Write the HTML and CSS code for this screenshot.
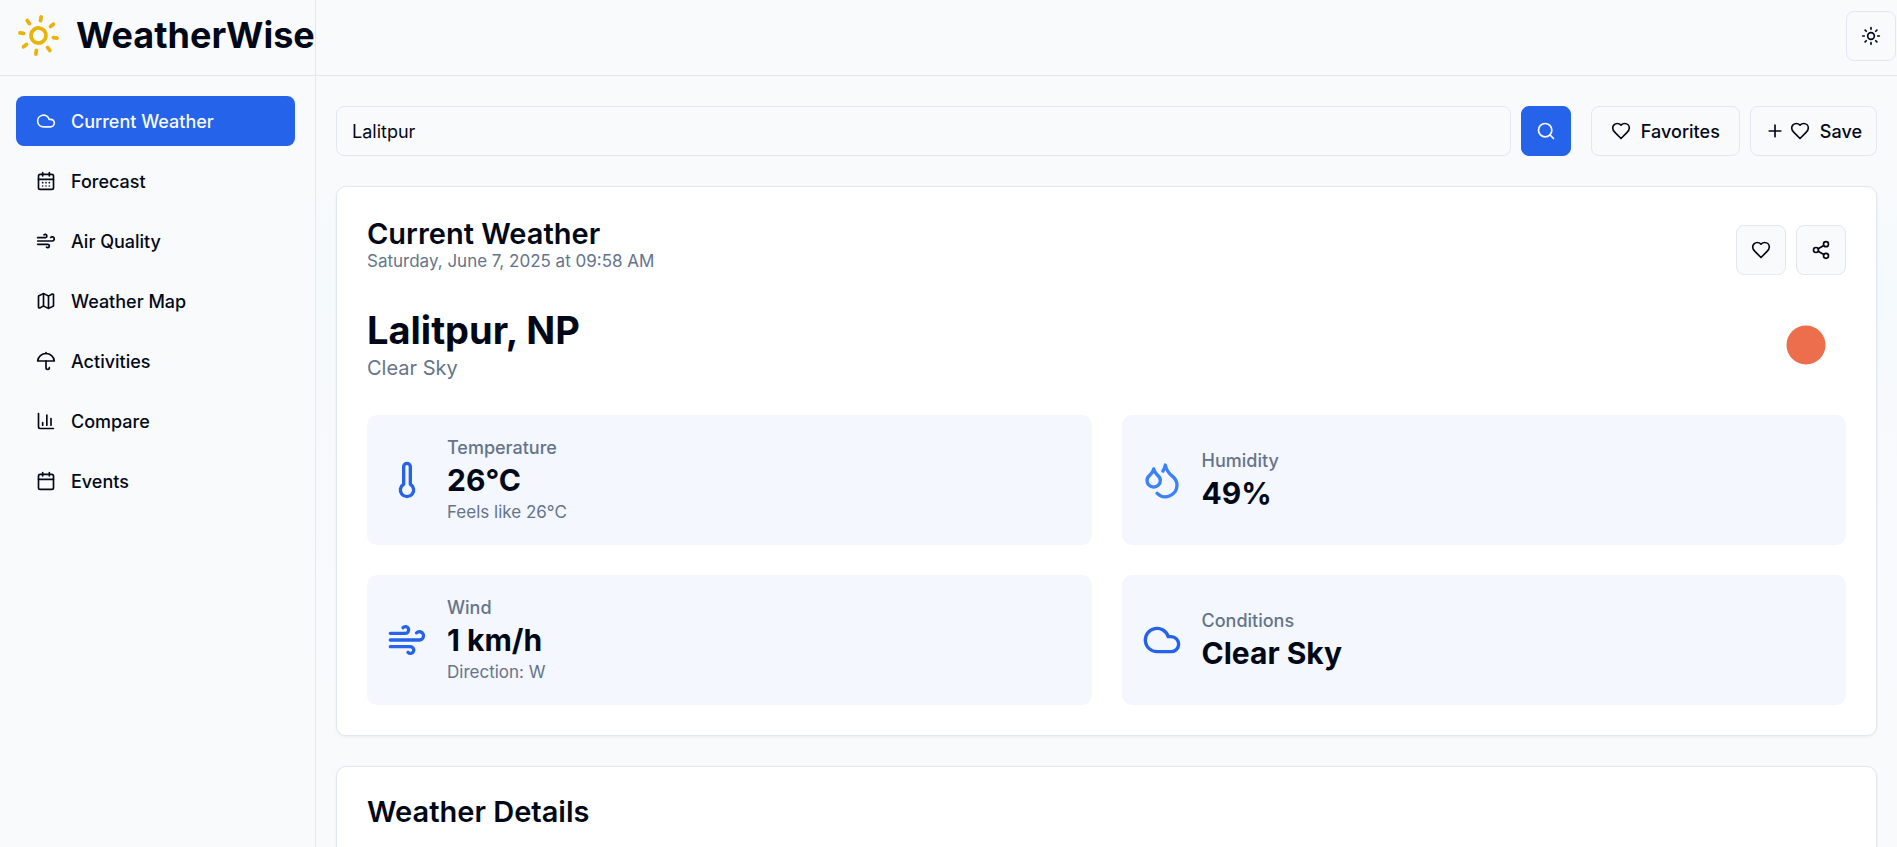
FILE: index.html
```html
<!DOCTYPE html>
<html lang="en">
<head>
<meta charset="utf-8">
<meta name="viewport" content="width=device-width, initial-scale=1">
<title>WeatherWise</title>
<link rel="stylesheet" href="styles.css">
</head>
<body>
<svg class="sprite" aria-hidden="true">
  <symbol id="sun" viewBox="0 0 24 24"><circle cx="12" cy="12" r="4"/><path d="M12 2v2M12 20v2M4.93 4.93l1.41 1.41M17.66 17.66l1.41 1.41M2 12h2M20 12h2M6.34 17.66l-1.41 1.41M19.07 4.93l-1.41 1.41"/></symbol>
  <symbol id="cloud" viewBox="0 0 24 24"><path d="M17.5 19H9a7 7 0 1 1 6.71-9h1.79a4.5 4.5 0 1 1 0 9Z"/></symbol>
  <symbol id="calendar-days" viewBox="0 0 24 24"><path d="M8 2v4M16 2v4"/><rect width="18" height="18" x="3" y="4" rx="2"/><path d="M3 10h18M8 14h.01M12 14h.01M16 14h.01M8 18h.01M12 18h.01M16 18h.01"/></symbol>
  <symbol id="calendar" viewBox="0 0 24 24"><path d="M8 2v4M16 2v4"/><rect width="18" height="18" x="3" y="4" rx="2"/><path d="M3 10h18"/></symbol>
  <symbol id="wind" viewBox="0 0 24 24"><path d="M17.7 7.7a2.5 2.5 0 1 1 1.8 4.3H2"/><path d="M9.6 4.6A2 2 0 1 1 11 8H2"/><path d="M12.6 19.4A2 2 0 1 0 14 16H2"/></symbol>
  <symbol id="map" viewBox="0 0 24 24"><path d="M14.106 5.553a2 2 0 0 0 1.788 0l3.659-1.83A1 1 0 0 1 21 4.619v12.764a1 1 0 0 1-.553.894l-4.553 2.277a2 2 0 0 1-1.788 0l-4.212-2.106a2 2 0 0 0-1.788 0l-3.659 1.83A1 1 0 0 1 3 19.381V6.618a1 1 0 0 1 .553-.894l4.553-2.277a2 2 0 0 1 1.788 0z"/><path d="M15 5.764v15M9 3.236v15"/></symbol>
  <symbol id="umbrella" viewBox="0 0 24 24"><path d="M22 12a10.06 10.06 1 0 0-20 0Z"/><path d="M12 12v8a2 2 0 0 0 4 0M12 2v1"/></symbol>
  <symbol id="bars" viewBox="0 0 24 24"><path d="M3 3v16a2 2 0 0 0 2 2h16M18 17V9M13 17V5M8 17v-3"/></symbol>
  <symbol id="search" viewBox="0 0 24 24"><circle cx="11" cy="11" r="8"/><path d="m21 21-4.3-4.3"/></symbol>
  <symbol id="heart" viewBox="0 0 24 24"><path d="M19 14c1.49-1.46 3-3.21 3-5.5A5.5 5.5 0 0 0 16.5 3c-1.76 0-3 .5-4.5 2-1.5-1.5-2.74-2-4.5-2A5.5 5.5 0 0 0 2 8.5c0 2.3 1.5 4.05 3 5.5l7 7Z"/></symbol>
  <symbol id="plus" viewBox="0 0 24 24"><path d="M5 12h14M12 5v14"/></symbol>
  <symbol id="share" viewBox="0 0 24 24"><circle cx="18" cy="5" r="3"/><circle cx="6" cy="12" r="3"/><circle cx="18" cy="19" r="3"/><path d="m8.59 13.51 6.83 3.98M15.41 6.51l-6.82 3.98"/></symbol>
  <symbol id="thermometer" viewBox="0 0 24 24"><path d="M14 4v10.54a4 4 0 1 1-4 0V4a2 2 0 0 1 4 0Z"/></symbol>
  <symbol id="droplets" viewBox="0 0 24 24"><path d="M7 16.3c2.2 0 4-1.83 4-4.05 0-1.16-.57-2.26-1.71-3.19S7.29 6.75 7 5.3c-.29 1.45-1.14 2.84-2.29 3.76S3 11.1 3 12.25c0 2.22 1.8 4.05 4 4.05z"/><path d="M12.56 6.6A10.97 10.97 0 0 0 14 3.02c.5 2.5 2 4.9 4 6.5s3 3.5 3 5.5a6.98 6.98 0 0 1-11.91 4.97"/></symbol>
</svg>

<div class="app">
  <aside class="sidebar">
    <div class="brand">
      <svg class="icon brand-icon"><use href="#sun"/></svg>
      <span class="brand-name">WeatherWise</span>
    </div>
    <nav class="nav">
      <a class="nav-item active" href="#current"><svg class="icon"><use href="#cloud"/></svg>Current Weather</a>
      <a class="nav-item" href="#forecast"><svg class="icon"><use href="#calendar-days"/></svg>Forecast</a>
      <a class="nav-item" href="#air"><svg class="icon"><use href="#wind"/></svg>Air Quality</a>
      <a class="nav-item" href="#map-view"><svg class="icon"><use href="#map"/></svg>Weather Map</a>
      <a class="nav-item" href="#activities"><svg class="icon"><use href="#umbrella"/></svg>Activities</a>
      <a class="nav-item" href="#compare"><svg class="icon"><use href="#bars"/></svg>Compare</a>
      <a class="nav-item" href="#events"><svg class="icon"><use href="#calendar"/></svg>Events</a>
    </nav>
  </aside>

  <div class="page">
    <header class="topbar">
      <button class="btn square" type="button" aria-label="Toggle theme"><svg class="icon"><use href="#sun"/></svg></button>
    </header>
    <main class="content">
      <div class="toolbar">
        <form class="search">
          <input class="field" type="text" value="Lalitpur" aria-label="City">
          <button class="btn square primary" type="button" aria-label="Search"><svg class="icon"><use href="#search"/></svg></button>
        </form>
        <div class="actions">
          <button class="btn favorites" type="button"><svg class="icon"><use href="#heart"/></svg>Favorites</button>
          <button class="btn save" type="button"><span class="icon-pair"><svg class="icon"><use href="#plus"/></svg><svg class="icon"><use href="#heart"/></svg></span>Save</button>
        </div>
      </div>

      <section class="card" id="current">
        <div class="card-head">
          <div>
            <h2 class="card-title">Current Weather</h2>
            <p class="muted">Saturday, June 7, 2025 at 09:58 AM</p>
          </div>
          <div class="head-actions">
            <button class="btn square" type="button" aria-label="Add to favorites"><svg class="icon"><use href="#heart"/></svg></button>
            <button class="btn square" type="button" aria-label="Share"><svg class="icon"><use href="#share"/></svg></button>
          </div>
        </div>
        <div class="place">
          <div>
            <h3 class="place-name">Lalitpur, NP</h3>
            <p class="place-sky">Clear Sky</p>
          </div>
          <svg class="sky" viewBox="0 0 80 80" role="img" aria-label="Clear sky"><circle cx="40" cy="40" r="19.5"/></svg>
        </div>
        <div class="stats">
          <div class="stat">
            <svg class="icon large"><use href="#thermometer"/></svg>
            <div><p class="stat-label">Temperature</p><p class="stat-value">26°C</p><p class="muted">Feels like 26°C</p></div>
          </div>
          <div class="stat">
            <svg class="icon large light"><use href="#droplets"/></svg>
            <div><p class="stat-label">Humidity</p><p class="stat-value">49%</p></div>
          </div>
          <div class="stat">
            <svg class="icon large"><use href="#wind"/></svg>
            <div><p class="stat-label">Wind</p><p class="stat-value">1 km/h</p><p class="muted">Direction: W</p></div>
          </div>
          <div class="stat">
            <svg class="icon large"><use href="#cloud"/></svg>
            <div><p class="stat-label">Conditions</p><p class="stat-value">Clear Sky</p></div>
          </div>
        </div>
      </section>

      <section class="card details">
        <h2 class="card-title">Weather Details</h2>
      </section>
    </main>
  </div>
</div>
</body>
</html>
```
FILE: styles.css
```css
:root {
  --bg: #f9fafc;
  --ink: #020817;
  --muted: #64748b;
  --line: #e2e8f0;
  --blue: #2563eb;
}

* { box-sizing: border-box; }

body {
  margin: 0;
  background: var(--bg);
  color: var(--ink);
  font: 400 18px/25px Inter, "Liberation Sans", sans-serif;
}

h2, h3, p { margin: 0; }

.sprite { display: none; }

.icon {
  flex: none;
  width: 20px;
  height: 20px;
  fill: none;
  stroke: currentColor;
  stroke-width: 2;
  stroke-linecap: round;
  stroke-linejoin: round;
}

.app {
  display: flex;
  height: 100vh;
  overflow: hidden;
}

/* Sidebar */
.sidebar {
  flex: none;
  width: 316px;
  border-right: 1px solid var(--line);
}

.brand {
  display: flex;
  align-items: center;
  gap: 15px;
  height: 76px;
  padding: 0 0 4px 16px;
  border-bottom: 1px solid var(--line);
}

.brand-icon {
  width: 45px;
  height: 45px;
  color: #eab308;
  transform: rotate(8deg);
}

.brand-name {
  font-size: 36px;
  font-weight: 700;
  line-height: 45px;
}

.nav {
  display: flex;
  flex-direction: column;
  gap: 10px;
  padding: 20px 20px 20px 16px;
}

.nav-item {
  display: flex;
  align-items: center;
  gap: 15px;
  height: 50px;
  padding: 0 20px;
  border-radius: 8px;
  color: inherit;
  font-weight: 500;
  text-decoration: none;
}

.nav-item.active {
  background: var(--blue);
  color: #f8fafc;
}

/* Page */
.page {
  flex: 1;
  min-width: 0;
  display: flex;
  flex-direction: column;
}

.topbar {
  flex: none;
  display: flex;
  align-items: center;
  justify-content: flex-end;
  height: 76px;
  padding: 0 1px 3px 0;
  border-bottom: 1px solid var(--line);
}

.content {
  flex: 1;
  min-height: 0;
  display: flex;
  flex-direction: column;
  gap: 30px;
  padding: 30px 20px 0;
  overflow: hidden;
  background: linear-gradient(#f9fafc 10%, #f5fafc 28%, #f7f9fd 45%, #f8fafd 65%, #f9fafc 85%);
}

.btn {
  display: inline-flex;
  align-items: center;
  justify-content: center;
  gap: 10px;
  height: 50px;
  padding: 0 19px;
  border: 1px solid var(--line);
  border-radius: 8px;
  background: var(--bg);
  color: inherit;
  font: inherit;
  font-weight: 500;
  cursor: pointer;
}

.square { width: 50px; padding: 0; }

.primary {
  border-color: var(--blue);
  background: var(--blue);
  color: #f8fafc;
}

.save { padding: 0 14px; }

.icon-pair { display: flex; gap: 5px; }

.toolbar { display: flex; gap: 20px; }

.search { flex: 1; display: flex; gap: 10px; }

.field {
  flex: 1;
  min-width: 0;
  height: 50px;
  padding: 0 15px;
  border: 1px solid var(--line);
  border-radius: 8px;
  background: var(--bg);
  color: inherit;
  font: inherit;
}

.actions { display: flex; gap: 10px; }

/* Cards */
.card {
  flex: none;
  padding: 30px;
  border: 1px solid var(--line);
  border-radius: 10px;
  background: #fff;
  box-shadow: 0 1px 3px rgba(0, 0, 0, 0.06);
}

.details { min-height: 240px; }

.card-head {
  display: flex;
  align-items: center;
  justify-content: space-between;
  margin-bottom: 30px;
}

.card-title {
  font-size: 29px;
  font-weight: 600;
  line-height: 30px;
}

.muted { color: var(--muted); font-size: 17px; }

.head-actions { display: flex; gap: 10px; margin-top: 8px; }

.place {
  display: flex;
  align-items: center;
  justify-content: space-between;
  margin-bottom: 30px;
}

.place-name {
  font-size: 38px;
  font-weight: 700;
  line-height: 45px;
}

.place-sky {
  color: var(--muted);
  font-size: 20px;
  line-height: 30px;
}

.sky { width: 80px; height: 80px; fill: #ec6e4c; }

.stats {
  display: grid;
  grid-template-columns: 1fr 1fr;
  gap: 30px;
}

.stat {
  display: flex;
  align-items: center;
  gap: 20px;
  padding: 20px;
  border-radius: 10px;
  background: #f4f7fe;
}

.large { width: 40px; height: 40px; color: var(--blue); }

.light { color: #3b82f6; }

.stat-label { color: var(--muted); font-weight: 500; }

.stat-value {
  font-size: 30px;
  font-weight: 700;
  line-height: 40px;
}
```
